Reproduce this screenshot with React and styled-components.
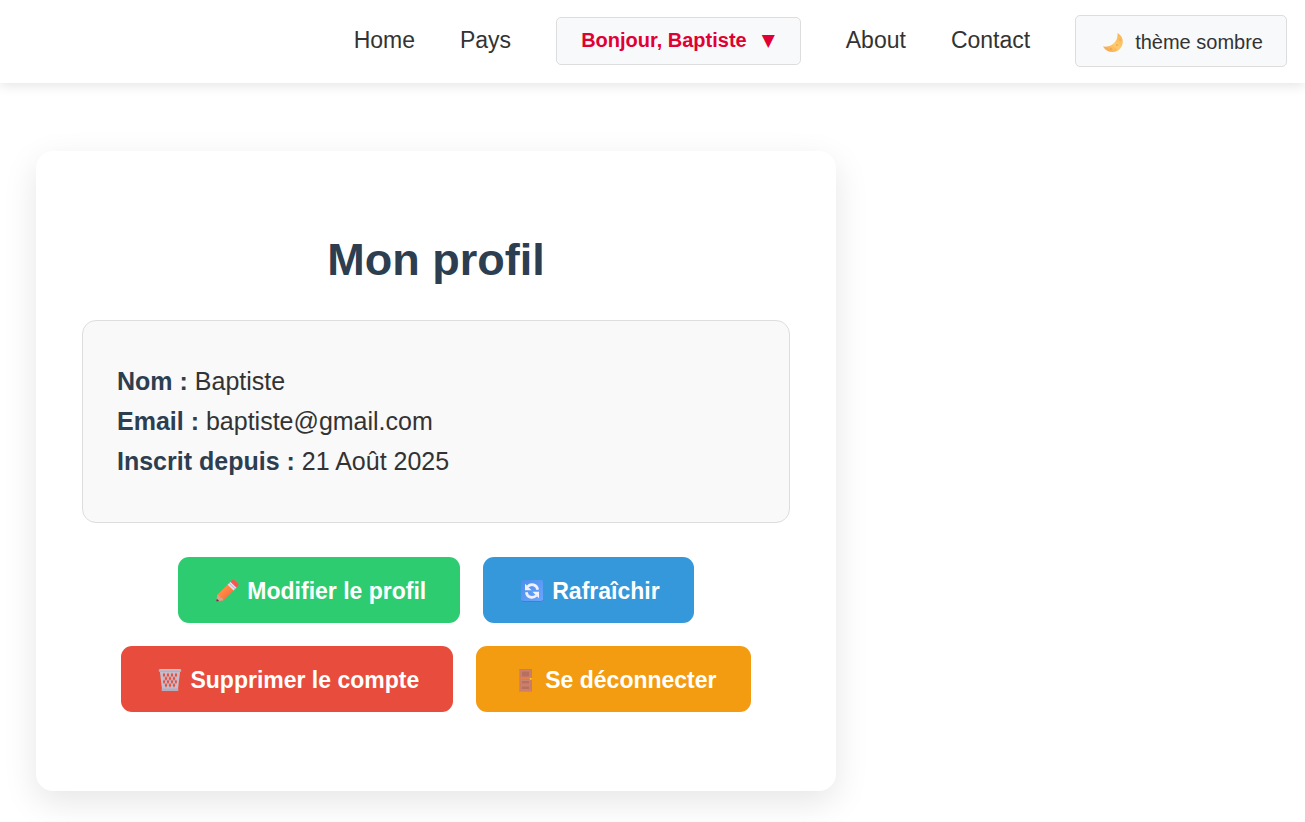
import React from "react";
import styled, { createGlobalStyle } from "styled-components";

const GlobalStyle = createGlobalStyle`
  *, *::before, *::after { box-sizing: border-box; }
  body {
    margin: 0;
    background: #fff;
    color: #333;
    font-family: "Liberation Sans", Arial, sans-serif;
    font-size: 23px;
  }
`;

const Header = styled.header`
  padding: 15px 18px 16px;
  background: #fff;
  box-shadow: 0 3px 11px rgba(0, 0, 0, 0.1);
`;

const Nav = styled.nav`
  display: flex;
  flex-wrap: wrap;
  align-items: center;
  justify-content: flex-end;
  gap: 16px 45px;
`;

const NavLink = styled.a`
  color: #333;
  line-height: 30px;
  padding-bottom: 2px;
  text-decoration: none;
`;

const NavButton = styled.button`
  display: inline-flex;
  align-items: center;
  gap: ${(p) => (p.$accent ? "15px" : "8px")};
  height: ${(p) => (p.$accent ? "48px" : "52px")};
  padding: ${(p) => (p.$accent ? "0 25px 2px 24px" : "2px 23px 0")};
  border: 1px solid #ddd;
  border-radius: 5px;
  background: #f8f9fb;
  color: ${(p) => (p.$accent ? "#e00034" : "#333")};
  font-family: inherit;
  font-size: 20px;
  font-weight: ${(p) => (p.$accent ? 700 : 400)};
  cursor: pointer;
`;

const Caret = styled.span`
  font-family: "DejaVu Sans", sans-serif;
  font-size: 17px;
  font-weight: 400;
  line-height: 20px;
`;

const Main = styled.main`
  padding: 68px 36px 31px;
`;

const Card = styled.section`
  max-width: 800px;
  padding: 82px 46px 79px;
  border-radius: 17px;
  background: #fff;
  box-shadow: 0 11px 34px rgba(0, 0, 0, 0.1);
`;

const Title = styled.h1`
  margin: 0 0 34px;
  color: #2c3e50;
  font-size: 45px;
  line-height: 53px;
  text-align: center;
`;

const Info = styled.div`
  padding: 40px 34px 41px;
  border: 1px solid #ddd;
  border-radius: 14px;
  background: #f9f9f9;
  font-size: 25px;
  line-height: 40px;
`;

const InfoLine = styled.p`
  margin: 0;
  strong { color: #2c3e50; }
`;

const Actions = styled.div`
  display: flex;
  flex-wrap: wrap;
  justify-content: center;
  gap: 23px;
  margin-top: 34px;
`;

const ActionButton = styled.button`
  display: inline-flex;
  align-items: center;
  gap: 5px;
  height: 66px;
  padding: 2px 34px 0;
  border: 0;
  border-radius: 11px;
  background: ${(p) => p.$color};
  color: #fff;
  font-family: inherit;
  font-size: 23px;
  font-weight: 700;
  cursor: pointer;
`;

const Emoji = styled.svg`
  flex: none;
  width: ${(p) => p.$width || 30}px;
  height: 24px;
`;

const Moon = () => (
  <Emoji $width={28} viewBox="0 0 28 24" aria-hidden="true">
    <defs>
      <linearGradient id="moon" x1="0" y1="1" x2="1" y2="0">
        <stop offset="0" stopColor="#f59b45" />
        <stop offset=".5" stopColor="#ffcb6b" />
        <stop offset="1" stopColor="#f5b052" />
      </linearGradient>
    </defs>
    <path d="M18.5 3C23.8 6 25 11.6 22.6 16.4C19 23.6 8.6 24.2 4 16.5C11 17.6 19.4 12.6 18.5 3Z" fill="url(#moon)" />
    <g fill="#f09a4b" opacity=".7">
      <circle cx="12" cy="19" r="1.1" />
      <circle cx="18" cy="15" r="1" />
      <circle cx="21" cy="10" r=".8" />
      <circle cx="16.5" cy="19" r=".6" />
    </g>
  </Emoji>
);

const Pencil = () => (
  <Emoji viewBox="0 0 30 24" aria-hidden="true">
    <defs>
      <linearGradient id="pencil" x1="0" y1="0" x2="1" y2="1">
        <stop offset="0" stopColor="#ffad4c" />
        <stop offset=".5" stopColor="#ff8142" />
        <stop offset="1" stopColor="#e85b48" />
      </linearGradient>
    </defs>
    <path d="M4.2 22.6L5.5 15.8L17 4.3L23 10.2L11.4 21.3Z" fill="url(#pencil)" />
    <path d="M4.2 22.6L5.5 15.8Q8.2 16 8.4 18.4Q11 18.5 11.4 21.3Z" fill="#d9a18c" />
    <path d="M4.2 22.6L4.8 19.7L7.2 21.9Z" fill="#493a50" />
    <path d="M15.6 5.7L18.6 2.8L24.5 8.6L21.5 11.6Z" fill="#e6d9e8" />
    <path d="M17.2 4.1L23.2 9.9" stroke="#b9a7c4" strokeWidth=".8" />
    <path d="M18.6 2.8L20.6 1Q21.6 .2 22.6 1.2L26.2 4.8Q27 5.7 26.2 6.7L24.5 8.6Z" fill="#fb544d" />
  </Emoji>
);

const Refresh = () => (
  <Emoji viewBox="0 0 30 24" aria-hidden="true">
    <defs>
      <linearGradient id="refresh" x1="0" y1="0" x2="1" y2="1">
        <stop offset="0" stopColor="#4a8fea" />
        <stop offset="1" stopColor="#6ba6ff" />
      </linearGradient>
    </defs>
    <rect x="4" y="1" width="22" height="22" rx="2" fill="url(#refresh)" />
    <path d="M4.5 21.5Q4.8 22.5 6 22.5H24.5Q25.5 22.4 25.5 21" fill="none" stroke="#4779dc" />
    <g fill="none" stroke="#f2f0fb" strokeWidth="2.7">
      <path d="M10.6 7.6C14 4.2 19.8 5.4 20.7 10.8" />
      <path d="M19.4 16.4C16 19.8 10.2 18.6 9.3 13.2" />
    </g>
    <path d="M8 4.8V11.2H14.6Z M22 19.2V12.8H15.4Z" fill="#f2f0fb" />
  </Emoji>
);

const Basket = () => (
  <Emoji viewBox="0 0 30 24" aria-hidden="true">
    <path d="M4.8 3H25.2L22.8 22.5H7.2Z" fill="#c5bdcc" />
    <g fill="#e4503f">
      <path d="M9 4.5L10.3 7L9 9.5L7.7 7ZM13 4.5L14.3 7L13 9.5L11.7 7ZM17 4.5L18.3 7L17 9.5L15.7 7ZM21 4.5L22.3 7L21 9.5L19.7 7Z" />
      <path d="M11 7.9L12.3 10.4L11 12.9L9.7 10.4ZM15 7.9L16.3 10.4L15 12.9L13.7 10.4ZM19 7.9L20.3 10.4L19 12.9L17.7 10.4Z" />
      <path d="M9 11.3L10.3 13.8L9 16.3L7.9 13.8ZM13 11.3L14.3 13.8L13 16.3L11.7 13.8ZM17 11.3L18.3 13.8L17 16.3L15.7 13.8ZM21 11.3L22.1 13.8L21 16.3L19.7 13.8Z" />
      <path d="M11 14.7L12.3 17.2L11 19.7L9.7 17.2ZM15 14.7L16.3 17.2L15 19.7L13.7 17.2ZM19 14.7L20.3 17.2L19 19.7L17.7 17.2Z" />
    </g>
    <rect x="3.7" y="1" width="22.6" height="3" rx="1.2" fill="#b8afbd" />
    <path d="M5 1.8H25" stroke="#d4ced9" strokeWidth=".8" />
    <rect x="6.5" y="20.5" width="17" height="2.6" rx="1" fill="#b5acbd" />
  </Emoji>
);

const Door = () => (
  <Emoji viewBox="0 0 30 24" aria-hidden="true">
    <rect x="9" y="1" width="13" height="22.5" rx=".6" fill="#c87c66" />
    <path d="M9.5 1.5V23H21.5" fill="none" stroke="#d08470" />
    <g fill="#b96f5e" stroke="#d38c76" strokeWidth=".6">
      <rect x="11.2" y="3" width="8.6" height="6" />
      <rect x="11.2" y="12.5" width="8.6" height="3.4" />
      <rect x="11.2" y="18" width="8.6" height="3.6" />
    </g>
    <path d="M10 10.6H21" stroke="#e08155" strokeWidth="1.4" />
    <circle cx="20.8" cy="10.8" r="1.1" fill="#ffc52f" />
  </Emoji>
);

const profile = [
  ["Nom", "Baptiste"],
  ["Email", "baptiste@gmail.com"],
  ["Inscrit depuis", "21 Août 2025"],
];

const actions = [
  { label: "Modifier le profil", color: "#2ecc71", Icon: Pencil },
  { label: "Rafraîchir", color: "#3498db", Icon: Refresh },
  { label: "Supprimer le compte", color: "#e74c3c", Icon: Basket },
  { label: "Se déconnecter", color: "#f39c12", Icon: Door },
];

export default function App() {
  return (
    <>
      <GlobalStyle />
      <Header>
        <Nav>
          <NavLink href="#home">Home</NavLink>
          <NavLink href="#pays">Pays</NavLink>
          <NavButton type="button" $accent aria-haspopup="true">
            <span>Bonjour, Baptiste</span>
            <Caret>▼</Caret>
          </NavButton>
          <NavLink href="#about">About</NavLink>
          <NavLink href="#contact">Contact</NavLink>
          <NavButton type="button">
            <Moon />
            <span>thème sombre</span>
          </NavButton>
        </Nav>
      </Header>
      <Main>
        <Card>
          <Title>Mon profil</Title>
          <Info>
            {profile.map(([label, value]) => (
              <InfoLine key={label}>
                <strong>{label} :</strong> {value}
              </InfoLine>
            ))}
          </Info>
          <Actions>
            {actions.map(({ label, color, Icon }) => (
              <ActionButton key={label} type="button" $color={color}>
                <Icon />
                <span>{label}</span>
              </ActionButton>
            ))}
          </Actions>
        </Card>
      </Main>
    </>
  );
}
